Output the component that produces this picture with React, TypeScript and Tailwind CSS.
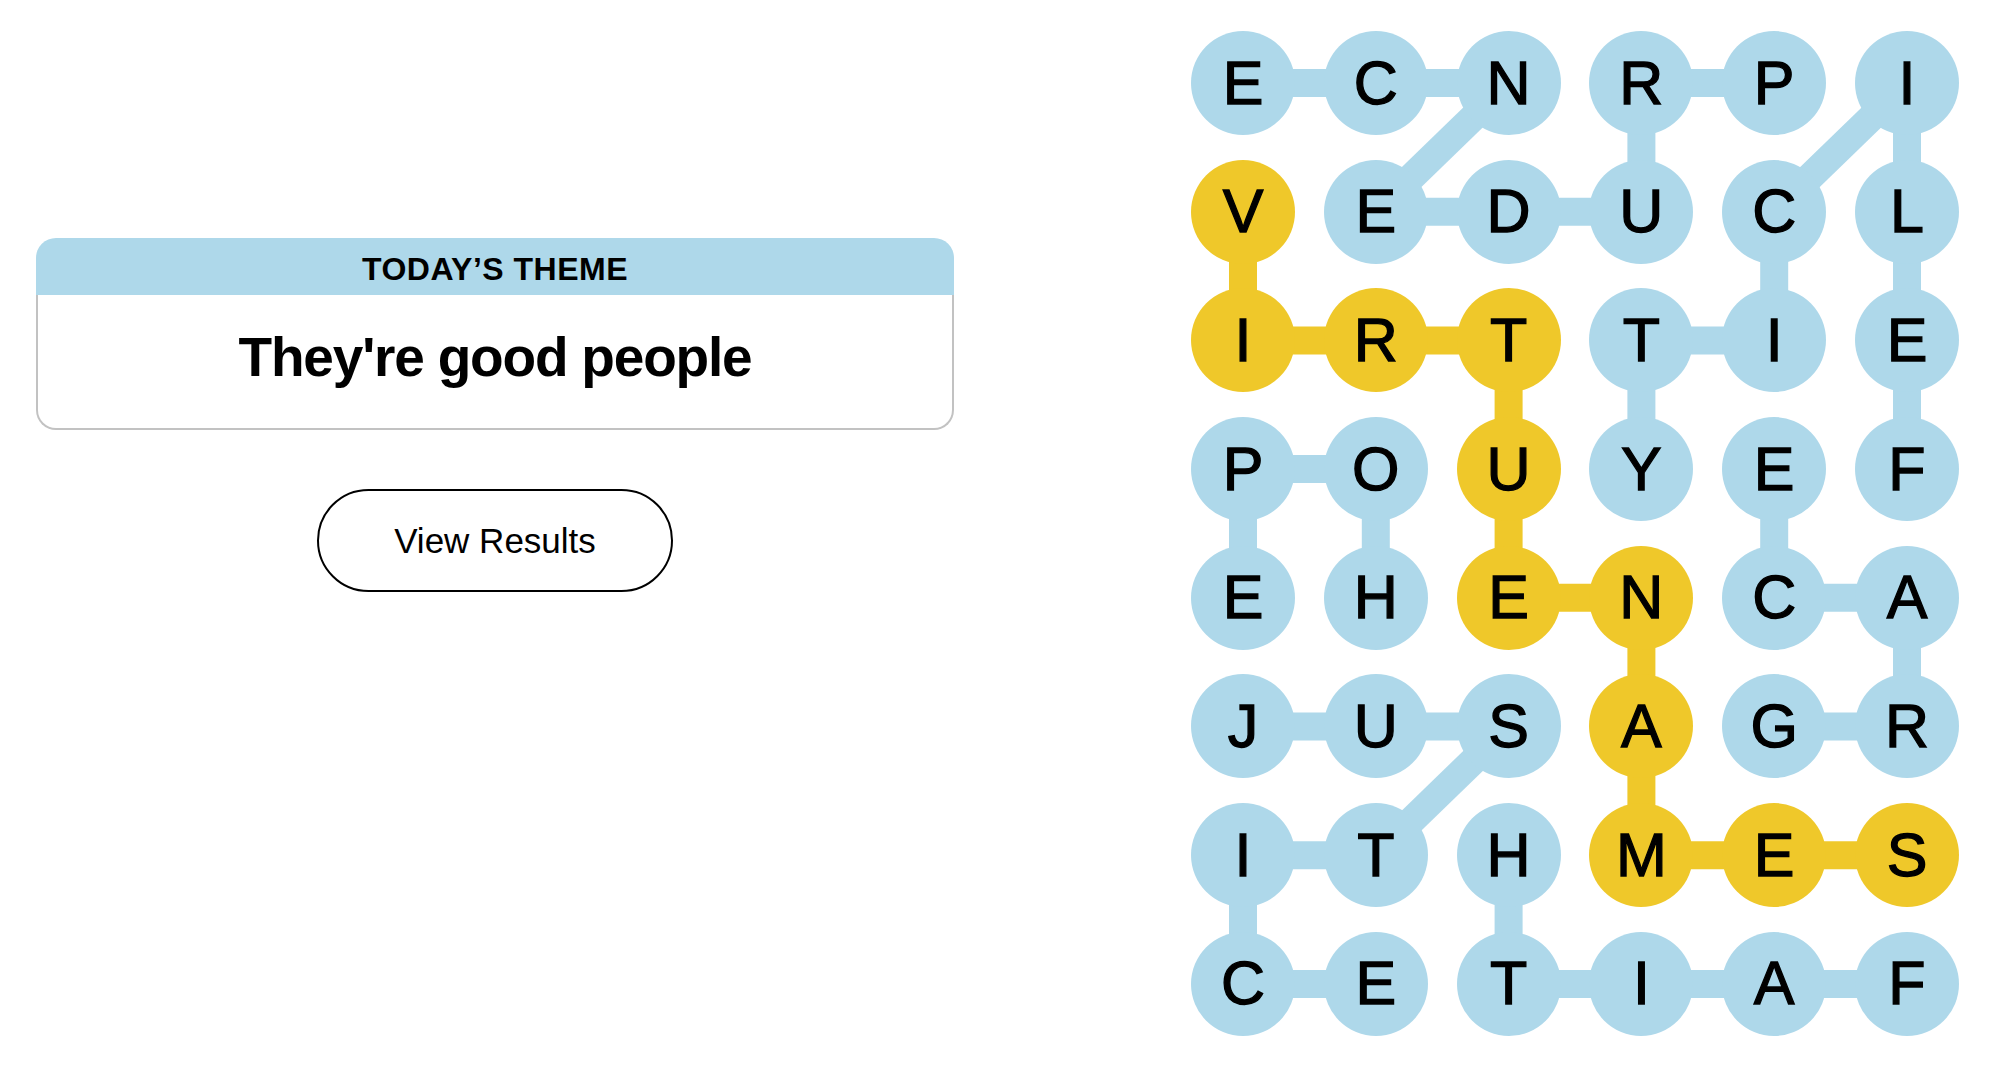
const ROWS = ["ECNRPI", "VEDUCL", "IRTTIE", "POUYEF", "EHENCA", "JUSAGR", "ITHMES", "CETIAF"];

const BLUE = "#aed8ea";
const GOLD = "#efc82a";

// cells that belong to the spangram
const SPANGRAM = ["1-0", "2-0", "2-1", "2-2", "3-2", "4-2", "4-3", "5-3", "6-3", "6-4", "6-5"];

// [row, col, row, col, isSpangram]
const LINKS: [number, number, number, number, boolean][] = [
  [0, 0, 0, 1, false],
  [0, 1, 0, 2, false],
  [0, 2, 1, 1, false],
  [1, 1, 1, 2, false],
  [1, 2, 1, 3, false],
  [0, 3, 1, 3, false],
  [0, 3, 0, 4, false],
  [0, 5, 1, 4, false],
  [0, 5, 1, 5, false],
  [1, 4, 2, 4, false],
  [1, 5, 2, 5, false],
  [2, 5, 3, 5, false],
  [2, 3, 2, 4, false],
  [2, 3, 3, 3, false],
  [3, 0, 3, 1, false],
  [3, 0, 4, 0, false],
  [3, 1, 4, 1, false],
  [3, 4, 4, 4, false],
  [4, 4, 4, 5, false],
  [4, 5, 5, 5, false],
  [5, 4, 5, 5, false],
  [5, 0, 5, 1, false],
  [5, 1, 5, 2, false],
  [5, 2, 6, 1, false],
  [6, 0, 6, 1, false],
  [6, 0, 7, 0, false],
  [7, 0, 7, 1, false],
  [6, 2, 7, 2, false],
  [7, 2, 7, 3, false],
  [7, 3, 7, 4, false],
  [7, 4, 7, 5, false],
  [1, 0, 2, 0, true],
  [2, 0, 2, 1, true],
  [2, 1, 2, 2, true],
  [2, 2, 3, 2, true],
  [3, 2, 4, 2, true],
  [4, 2, 4, 3, true],
  [4, 3, 5, 3, true],
  [5, 3, 6, 3, true],
  [6, 3, 6, 4, true],
  [6, 4, 6, 5, true],
];

const PITCH_X = 132.8;
const PITCH_Y = 128.7;
const R = 52;

function Board() {
  const cx = (c: number) => R + c * PITCH_X;
  const cy = (r: number) => R + r * PITCH_Y;
  return (
    <div className="relative mt-[31px] ml-[201px] h-[1005px] w-[768px]">
      <svg className="absolute inset-0" width="768" height="1005" viewBox="0 0 768 1005">
        {LINKS.map(([r1, c1, r2, c2, gold], i) => (
          <line
            key={i}
            x1={cx(c1)}
            y1={cy(r1)}
            x2={cx(c2)}
            y2={cy(r2)}
            stroke={gold ? GOLD : BLUE}
            strokeWidth={28}
          />
        ))}
      </svg>
      <div className="relative grid grid-cols-[repeat(6,104px)] gap-x-[28.8px] gap-y-[24.7px]">
        {ROWS.map((row, r) =>
          row.split("").map((ch, c) => {
            const gold = SPANGRAM.includes(`${r}-${c}`);
            return (
              <div
                key={`${r}-${c}`}
                className={`flex h-[104px] w-[104px] items-center justify-center rounded-full font-['Liberation_Sans',Arial,sans-serif] text-[61px] leading-none text-black [-webkit-text-stroke:1.3px_black] ${
                  gold ? "bg-[#efc82a]" : "bg-[#aed8ea]"
                }`}
              >
                {ch}
              </div>
            );
          })
        )}
      </div>
    </div>
  );
}

export default function App() {
  return (
    <div className="flex h-[1075px] w-[2000px] bg-white font-['Liberation_Sans',Arial,sans-serif]">
      <div className="flex w-[990px] flex-col items-center px-[36px] pt-[238px]">
        <div className="w-full">
          <div className="h-[57px] rounded-t-[20px] bg-[#aed8ea] pt-[15px] text-center text-[32px] font-bold leading-none tracking-[0.5px] text-black">
            TODAY’S THEME
          </div>
          <div className="h-[135px] rounded-b-[20px] border-2 border-t-0 border-[#c2c2c2] pt-[35px] text-center text-[55px] font-bold leading-none tracking-[-1.2px] text-black">
            They're good people
          </div>
        </div>
        <button className="mt-[59px] flex h-[103px] w-[356px] items-center justify-center rounded-full border-2 border-black bg-white text-[35px] leading-none text-black">
          View Results
        </button>
      </div>
      <Board />
    </div>
  );
}
